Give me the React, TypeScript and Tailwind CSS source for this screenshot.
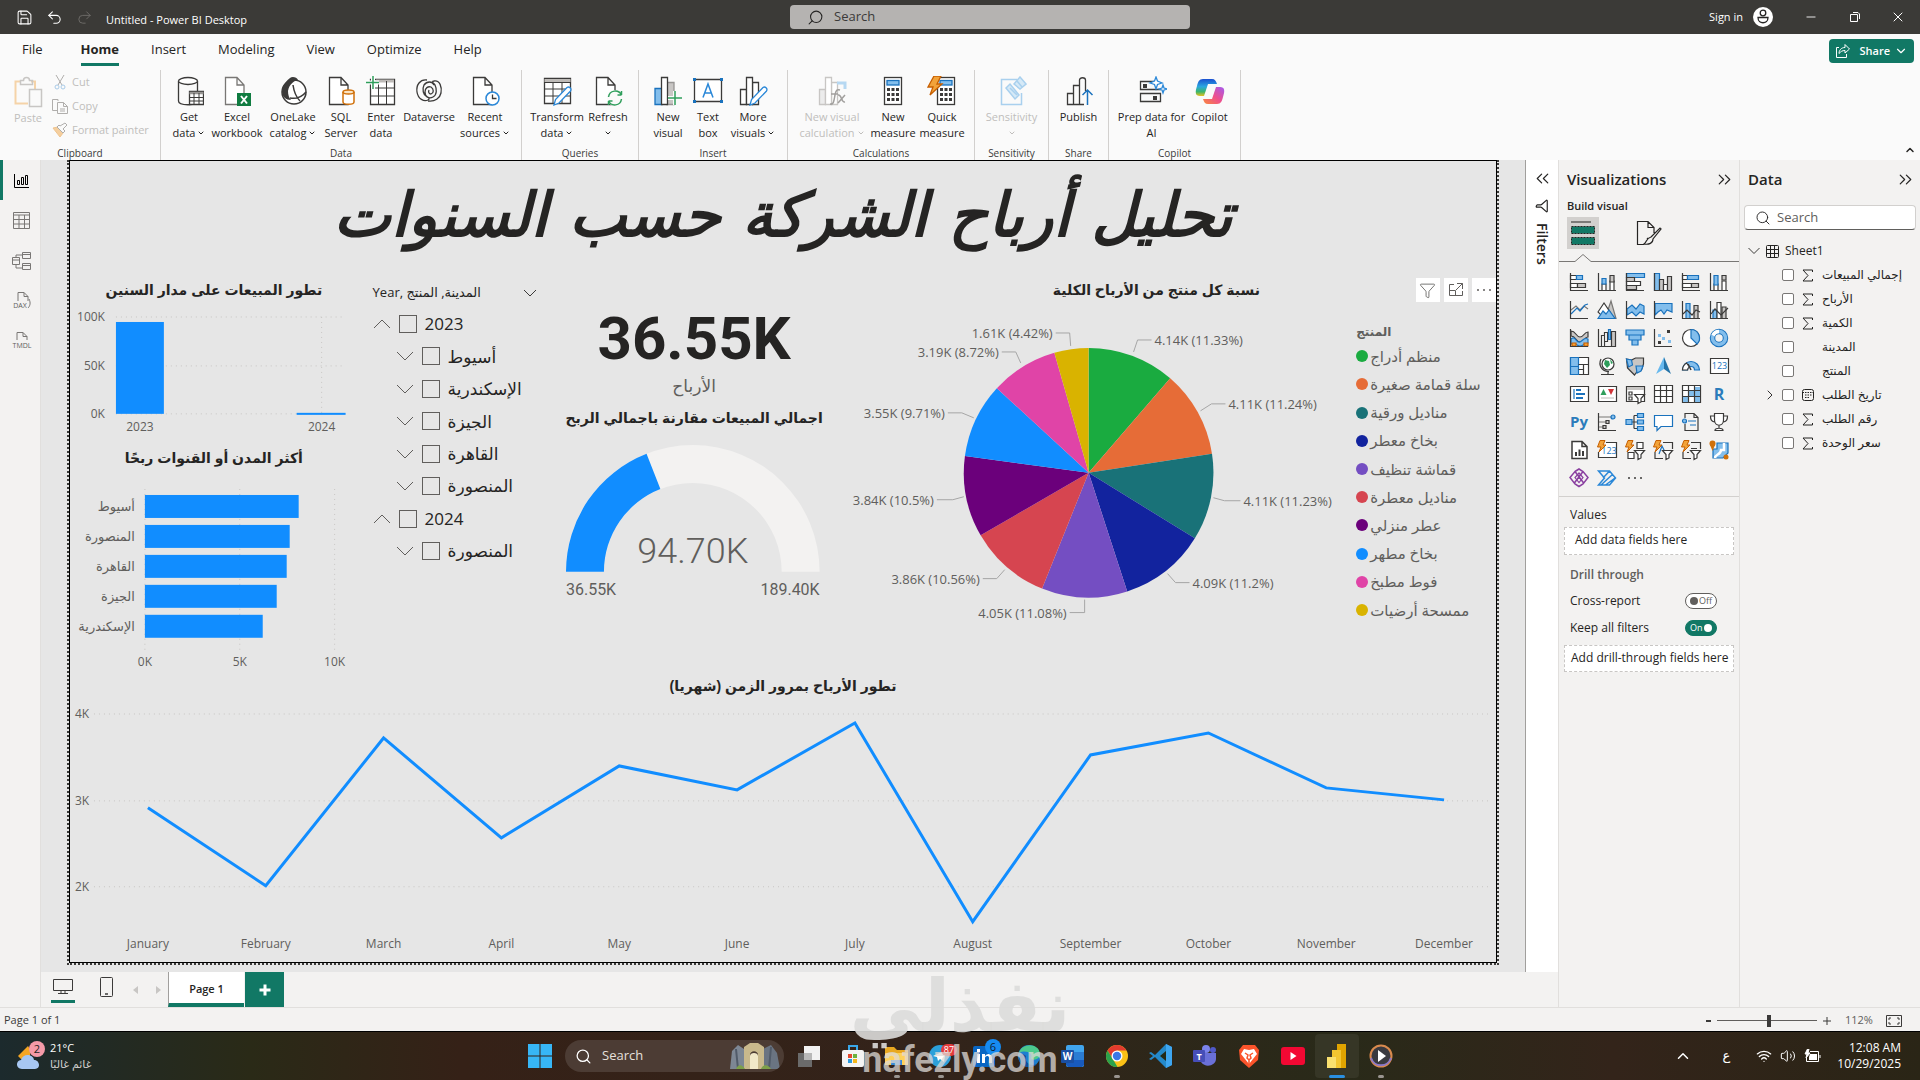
import type { ReactNode } from 'react';
import {
	ChevronDown,
	ChevronRight,
	ChevronUp,
	ChevronsLeft,
	ChevronsRight,
	Filter,
	Minus,
	Redo2,
	Save,
	Search,
	Undo2,
	Volume2,
	Wifi,
	X,
} from 'lucide-react';
import clsx from 'clsx';

const INK = '#3b3a39';
const GREY = '#c8c6c4';
const SKY = '#83beec';
const BLUE = '#1a72bd';
const AMBER = '#f2a33a';

/* ---------- Ribbon icons (30 x 30) ---------- */

const Doc = ({ stroke = INK }: { stroke?: string }) => (
	<path d="M3.5 1.5H15l7 7.5v19.500H3.5zM15 1.5V9h7" fill="#fff" stroke={stroke} />
);

const Bars = ({ faded }: { faded?: boolean }) => (
	<g stroke={faded ? '#c8c6c4' : INK} fill={faded ? '#ececec' : '#fff'}>
		<path d="M2.5 13.5h6v15h-6z" />
		<path d="M14.5 6.5h6v22h-6z" fill="#fff" />
		<path d="M8.5 1.5h6v27h-6z" fill="#fff" />
	</g>
);

const Pencil = () => (
	<path d="M12 29l1.5-5.500L25 11.500c2-1.500 5 1 3.500 3.500L17 27z" fill="#fff" stroke="#2b88d8" />
);

const Calc = ({ x = 0 }: { x?: number }) => (
	<g transform={`translate(${x} 0)`}>
		<rect x="6.5" y="1.5" width="17" height="27" fill="#fff" stroke={INK} />
		<rect x="9" y="4.5" width="12" height="4.5" fill={SKY} stroke={BLUE} />
		<path d="M9 13.5h12M9 18.5h12M9 23.5h12" stroke={INK} strokeWidth="3" strokeDasharray="3 1.5" />
	</g>
);

const ribbonIcons: Record<string, ReactNode> = {
	database: (
		<>
			<path d="M4.5 5v20c0 5 19 5 19 0V5" stroke={INK} />
			<ellipse cx="14" cy="5" rx="9.5" ry="3.5" stroke={INK} fill="#fff" />
			<path d="M15.5 15.5h14v13h-14z" fill="#fff" stroke={INK} />
			<path d="M15.5 17h14" stroke="#979593" strokeWidth="2.5" />
			<path d="M15.5 21.5h14M15.5 25h14M20 17v11M25 17v11" stroke={INK} strokeWidth="1" />
		</>
	),
	excel: (
		<>
			<Doc stroke="#797775" />
			<rect x="15" y="17" width="14" height="13" fill="#107c41" />
			<path d="M19 20l6 7.5M25 20l-6 7.5" stroke="#fff" strokeWidth="2" />
		</>
	),
	onelake: (
		<>
			<circle cx="16" cy="16" r="12" fill="#fff" stroke={INK} strokeWidth="1.5" />
			<path d="M4 15C5 9 9 4 12 2c2-2 7-1 8 2-3 0-9 4-10 11 0 4 1 7 3 9-5 0-9-3-9-9z" fill={INK} />
			<path d="M15 9c1 7 3 12 7 16M12 22c6 1 12-1 16-6" stroke={INK} strokeWidth="1.5" />
		</>
	),
	sql: (
		<>
			<Doc />
			<path d="M17 16v10c0 3 11 3 11 0V16" fill="#fff" stroke="#d0700a" strokeWidth="1.5" />
			<ellipse cx="22.5" cy="16" rx="5.5" ry="2" fill="#fbe3c0" stroke="#d0700a" strokeWidth="1.5" />
		</>
	),
	enter: (
		<>
			<path d="M4.5 3.5h24v25h-24z" stroke={INK} fill="#fff" />
			<path d="M10 5h18" stroke="#bebbb8" strokeWidth="3" />
			<path d="M4.5 12h24M4.5 20h24M12.5 5v23M20.5 5v23" stroke={INK} strokeWidth="1" />
			<path d="M7 0v13M0 6.5h13" stroke="#fff" strokeWidth="4" />
			<path d="M7 0v13M0 6.5h13" stroke="#2f9e5b" strokeWidth="1.5" />
		</>
	),
	dataverse: (
		<>
			<path d="M13 4C6 3 2 9 3 16s7 10 11 8c2-1 1-3-1-3-4-2-5-8-3-12 3-4 8-4 11 0 2 4 2 10-2 12-4 2-8 0-8-5 0-4 3-6 6-5 3 2 3 6 0 7-2 0-3-2-2-4" stroke={INK} />
			<path d="M20 5c6-1 8 6 7 12-1 5-6 9-13 8M20 5c-2 0-2 2 0 4" stroke={INK} />
		</>
	),
	recent: (
		<>
			<Doc />
			<circle cx="22.5" cy="22.5" r="6.5" fill="#fff" stroke="#2b88d8" strokeWidth="1.5" />
			<path d="M22.5 18.5v4h4" stroke={INK} />
		</>
	),
	transform: (
		<>
			<path d="M2.5 2.5h26v25h-26z" stroke={INK} fill="#fff" />
			<path d="M2.5 4.5h26" stroke="#bebbb8" strokeWidth="3" />
			<path d="M2.5 6.5h26M2.5 13h26M2.5 20h26M11 7v20M20 7v20" stroke={INK} strokeWidth="1" />
			<Pencil />
		</>
	),
	refresh: (
		<>
			<Doc />
			<circle cx="22" cy="22" r="8" fill="#fafafa" />
			<path d="M15.5 21c1-7 10-8 13-2v-4M28.5 19h-4M28.5 23c-1 7-10 8-13 2v4M15.5 25h4" stroke="#2f9e5b" strokeWidth="1.5" />
		</>
	),
	newVisual: (
		<>
			<path d="M2 12.5h7v16H2z" fill={SKY} stroke={BLUE} />
			<path d="M14 6.5h7v22h-7z" fill={GREY} stroke="#979593" />
			<path d="M8.5 1.5h6v27h-6z" fill="#fff" stroke={INK} />
			<path d="M22 15v14M15 22h14" stroke="#fafafa" strokeWidth="4" />
			<path d="M22 15v14M15 22h14" stroke="#2f9e5b" strokeWidth="1.5" />
		</>
	),
	textBox: (
		<>
			<path d="M1.5 3.5h27v22h-27z" stroke={INK} fill="#fff" />
			<path d="M10 21.5L15 8l5 13.500M11.5 17h7" stroke="#2b88d8" strokeWidth="1.5" />
			<path d="M0 2h3v3H0zM27 2h3v3h-3zM0 24h3v3H0zM27 24h3v3h-3z" fill={BLUE} />
		</>
	),
	moreVisuals: (
		<>
			<Bars />
			<Pencil />
		</>
	),
	visualCalc: (
		<>
			<Bars faded />
			<path d="M20 7h8v6" stroke="#b6d8f2" strokeWidth="3" />
			<path d="M13 28c4 1 4-4 5-9s2-6 5-5M14 18h7M21 19c4-1 3 8 7 7M28 19l-7 8" stroke="#a19f9d" strokeWidth="1.5" />
		</>
	),
	measure: <Calc />,
	quick: (
		<>
			<Calc x={4} />
			<path d="M7 0h7l-4 8h5L3 19l3-8H1z" fill={AMBER} stroke="#c75f00" />
		</>
	),
	sensitivity: (
		<g stroke="#a9d0ee" strokeWidth="1.5">
			<path d="M20 3.5H4.5v25h20V17" />
			<path d="M9 12l4-4 9 11-4 4zM13 12l7 7M17 8l6-7 6 7-6 5zM20 5l5 6" fill="#d5e9f7" />
		</g>
	),
	publish: (
		<>
			<path d="M3.5 17.5h6v11h-6zM9.5 9.5h6v19h-6zM15.5 9.5V4c0-3 6-3 6 0v24.500h-6" stroke={INK} />
			<path d="M20 15v15h6V15z" fill="#fafafa" />
			<path d="M23.5 29V14M18.5 19l5-5 5 5" stroke={BLUE} strokeWidth="1.5" />
		</>
	),
	prep: (
		<>
			<path d="M17 5.5H3.500v8H24M3.500 17.500h20v8h-20z" stroke={INK} />
			<path d="M6 8h4v4H6zM16 20h4v4h-4z" fill={INK} />
			<path d="M19 1l1.500 4L25 7l-4.500 1.500L19 13l-1.500-4.500L13 7l4.500-2zM26 9l1 3 3 1-3 1-1 3-1-3-3-1 3-1z" fill="#fff" stroke="#2b88d8" />
		</>
	),
	copilot: (
		<>
			<path d="M8 3h9c3 0 4 2 5 5H13L9 20H5C0 20 0 16 2 10c1-4 2-7 6-7z" fill="url(#cpA)" />
			<path d="M22 28h-9c-3 0-4-2-5-5h9l4-12h4c5 0 5 4 3 10-1 4-2 7-6 7z" fill="url(#cpB)" />
			<defs>
				<linearGradient id="cpA" x1="0" y1="0" x2="0" y2="1">
					<stop offset="0" stopColor="#1a4fd0" />
					<stop offset=".45" stopColor="#2aa7e0" />
					<stop offset=".75" stopColor="#3cb66a" />
					<stop offset="1" stopColor="#e8c020" />
				</linearGradient>
				<linearGradient id="cpB" x1="1" y1="0" x2="0" y2="1">
					<stop offset="0" stopColor="#a35af0" />
					<stop offset=".5" stopColor="#ef4f8c" />
					<stop offset="1" stopColor="#f98a3c" />
				</linearGradient>
			</defs>
		</>
	),
};

type RibbonItem = { icon: string; lines: string[]; width: string; menu?: boolean; faded?: boolean };

const ribbonGroups: { name: string; box: string; items: RibbonItem[] }[] = [
	{
		name: 'Data',
		box: 'w-[361px]',
		items: [
			{ icon: 'database', lines: ['Get', 'data'], width: 'w-[38px]', menu: true },
			{ icon: 'excel', lines: ['Excel', 'workbook'], width: 'w-[58px]' },
			{ icon: 'onelake', lines: ['OneLake', 'catalog'], width: 'w-[54px]', menu: true },
			{ icon: 'sql', lines: ['SQL', 'Server'], width: 'w-[42px]' },
			{ icon: 'enter', lines: ['Enter', 'data'], width: 'w-[38px]' },
			{ icon: 'dataverse', lines: ['Dataverse'], width: 'w-[58px]' },
			{ icon: 'recent', lines: ['Recent', 'sources'], width: 'w-[54px]', menu: true },
		],
	},
	{
		name: 'Queries',
		box: 'w-[117px]',
		items: [
			{ icon: 'transform', lines: ['Transform', 'data'], width: 'w-[56px]', menu: true },
			{ icon: 'refresh', lines: ['Refresh', ''], width: 'w-[46px]', menu: true },
		],
	},
	{
		name: 'Insert',
		box: 'w-[149px]',
		items: [
			{ icon: 'newVisual', lines: ['New', 'visual'], width: 'w-[40px]' },
			{ icon: 'textBox', lines: ['Text', 'box'], width: 'w-[40px]' },
			{ icon: 'moreVisuals', lines: ['More', 'visuals'], width: 'w-[50px]', menu: true },
		],
	},
	{
		name: 'Calculations',
		box: 'w-[187px]',
		items: [
			{ icon: 'visualCalc', lines: ['New visual', 'calculation'], width: 'w-[74px]', menu: true, faded: true },
			{ icon: 'measure', lines: ['New', 'measure'], width: 'w-[48px]' },
			{ icon: 'quick', lines: ['Quick', 'measure'], width: 'w-[50px]' },
		],
	},
	{
		name: 'Sensitivity',
		box: 'w-[74px]',
		items: [{ icon: 'sensitivity', lines: ['Sensitivity', ''], width: 'w-[60px]', menu: true, faded: true }],
	},
	{
		name: 'Share',
		box: 'w-[60px]',
		items: [{ icon: 'publish', lines: ['Publish'], width: 'w-[48px]' }],
	},
	{
		name: 'Copilot',
		box: 'w-[132px]',
		items: [
			{ icon: 'prep', lines: ['Prep data for', 'AI'], width: 'w-[70px]' },
			{ icon: 'copilot', lines: ['Copilot'], width: 'w-[46px]' },
		],
	},
];

/* ---------- Visual gallery icons (20 x 20) ---------- */

const Axis = () => <path d="M1.5 1v17.500H19" />;
const Bolt = () => <path d="M3 .5h5L6 5h3L2 12l2-5H.5z" fill={AMBER} stroke="#c75f00" strokeWidth="1" />;
const Funnel = () => <path d="M9.5 10.5h10L16 14.500V18l-3 1.500v-5z" fill="#fff" />;
const Frame = () => <path d="M1.5 2.5h18v15h-18z" fill="#fff" />;

const galleryIcons: { name: string; art: ReactNode }[] = [
	{ name: 'Stacked bar chart', art: <><path d="M1.5 3.5h6v4h-6zM1.5 11.5h7v4h-7z" fill="#fff" /><path d="M7.5 3.5h6v4h-6z" fill={SKY} stroke={BLUE} /><path d="M8.5 11.5h8v4h-8z" fill={GREY} /><Axis /></> },
	{ name: 'Stacked column chart', art: <><path d="M5 12h4v6.500H5zM13 9h4v9.500h-4z" fill="#fff" /><path d="M5 6.500h4V12H5z" fill={SKY} stroke={BLUE} /><path d="M13 3.500h4V10h-4z" fill={GREY} /><Axis /></> },
	{ name: 'Clustered bar chart', art: <><path d="M1.5 1.5h18v4h-18z" fill={SKY} stroke={BLUE} /><path d="M1.5 5.5h8v4h-8z" fill={GREY} /><path d="M1.5 9.5h14v4h-14z" fill="#fff" /><path d="M1.5 13.5h10v4h-10z" fill={GREY} /><Axis /></> },
	{ name: 'Clustered column chart', art: <><path d="M1.5 1.5h5v17h-5z" fill={SKY} stroke={BLUE} /><path d="M6.5 7.5h4v11h-4z" fill={GREY} /><path d="M10.5 12.5h4v6h-4z" fill="#fff" /><path d="M14.5 4.5h4v14h-4z" fill={GREY} /><Axis /></> },
	{ name: '100% stacked bar chart', art: <><path d="M1.5 3.5h5v4h-5zM1.5 11.5h9v4h-9z" fill="#fff" /><path d="M6.5 3.5h11v4h-11z" fill={SKY} stroke={BLUE} /><path d="M10.5 11.5h7v4h-7z" fill={GREY} /><Axis /></> },
	{ name: '100% stacked column chart', art: <><path d="M5 12h4v6.500H5zM13 9h4v9.500h-4z" fill="#fff" /><path d="M5 3.500h4V13H5z" fill={SKY} stroke={BLUE} /><path d="M13 3.500h4V8h-4z" fill={GREY} /><Axis /></> },
	{ name: 'Line chart', art: <><path d="M2 10l5-4 4 4 4-4 4 3" stroke="#797775" /><path d="M2 14l6-6 3 3 5-6 3-1" stroke={BLUE} /><Axis /></> },
	{ name: 'Area chart', art: <><path d="M8 18.5L14 1l5 17.500z" fill={GREY} stroke="#797775" /><path d="M1 12L7 3l6 9-6 6z" fill="#fff" /><path d="M1 18.5L6 11l3 3 3-4 6 8.500z" fill={SKY} stroke={BLUE} /></> },
	{ name: 'Stacked area chart', art: <><path d="M2 9l5-4 4 4 4-5 4 2v8l-4-2-4 4-4-4-5 3z" fill={SKY} stroke={BLUE} /><Axis /></> },
	{ name: '100% stacked area chart', art: <><path d="M2 3.5h17V12l-5-2-3 4-3-4-3 2-3 3z" fill={SKY} stroke={BLUE} /><Axis /></> },
	{ name: 'Line and stacked column chart', art: <><path d="M5 3.5h4v15H5z" fill={SKY} stroke={BLUE} /><path d="M13 5.500h4v13h-4z" fill={GREY} /><path d="M2 14l4-4 5 5 4-5 4 2" /><Axis /></> },
	{ name: 'Line and clustered column chart', art: <><path d="M4 10h4v8.500H4z" fill={SKY} stroke={BLUE} /><path d="M8 2.500h4v16H8z" fill="#fff" /><path d="M13 7h4v11.500h-4z" fill={GREY} /><path d="M2 14l4-5 6 6 7-7" /><Axis /></> },
	{ name: 'Ribbon chart', art: <><path d="M2 3c5 0 5 6 9 6s4-5 8-5v5c-4 0-4 5-8 5s-4-6-9-6z" fill={GREY} /><path d="M2 11c5-4 5 5 9 3s4-5 8-3v4c-4 0-4 3-8 3s-5-4-9-2z" fill={SKY} stroke={BLUE} /><path d="M3 15h4v3H3zM15 15h4v3h-4z" fill={AMBER} stroke="#c75f00" /><Axis /></> },
	{ name: 'Waterfall chart', art: <><path d="M4.5 7.5h3v11h-3zM7.5 4.5h3v9h-3z" fill="#fff" /><path d="M11.5 1.5h2v10h-2z" fill={SKY} stroke={BLUE} /><path d="M14.5 3.5h4v15h-4z" fill={GREY} /><Axis /></> },
	{ name: 'Funnel', art: <path d="M1 2h18v5H1zM4 7h12v5H4zM7 12h6v5H7z" fill={SKY} stroke={BLUE} /> },
	{ name: 'Scatter chart', art: <><Axis /><path d="M14 2h3v3h-3zM5 13h3v3H5z" fill={INK} stroke="none" /><path d="M5 6h3v3H5zM9 9h3v3H9zM15 12h3v3h-3z" fill={SKY} stroke="none" /></> },
	{ name: 'Pie chart', art: <><circle cx="10" cy="10" r="8.5" fill="#fff" /><path d="M10 1.5a8.500 8.500 0 016 14.500l-6-6z" fill={SKY} stroke={BLUE} /></> },
	{ name: 'Donut chart', art: <><circle cx="10" cy="10" r="6.5" stroke={BLUE} strokeWidth="5.500" /><circle cx="10" cy="10" r="6.5" stroke={SKY} strokeWidth="3.5" /><path d="M4 7.500a6.500 6.500 0 016-4" stroke="#fff" strokeWidth="3.5" /></> },
	{ name: 'Treemap', art: <><path d="M1.5 1.5h18v17h-18z" fill="#fff" /><path d="M1.5 1.5h8v9h-8zM1.5 10.5h8v8h-8z" fill={SKY} stroke={BLUE} /><path d="M9.5 8.5h10M9.5 13.5h5v5M14.5 8.5v10" /></> },
	{ name: 'Map', art: <><circle cx="11" cy="8" r="6" fill="#fff" /><path d="M8 4l4 1 1 4-3 3-3-4zM13 3l3 4-2 1z" fill="#2f9e5b" stroke="none" /><path d="M4 3C1 9 5 16 12 15.500M11 15.500v3M4 18.500h13" /></> },
	{ name: 'Filled map', art: <><path d="M1.5 3l5 1 4-2h8v6l-2 6-4 1-3 4-4-4-3-3z" fill={GREY} /><path d="M1.5 3l5 1 1 5-4 2zM11 10h7l-2 5-4 2z" fill={SKY} stroke={BLUE} /></> },
	{ name: 'Azure map', art: <><path d="M11 1L3 18l8-5z" fill="#66b8ee" stroke="none" /><path d="M11 1l7 17-7-5z" fill="#2373a8" stroke="none" /></> },
	{ name: 'Gauge', art: <><path d="M1.5 14a8.500 8.500 0 0117 0h-5a3.500 3.500 0 00-7 0z" fill={SKY} stroke={BLUE} /><path d="M1.5 14a8.500 8.500 0 014-7l3 4a3.500 3.500 0 00-2 3z" fill="#fff" /><path d="M10 14l-3-6" strokeWidth="1.5" /></> },
	{ name: 'Card', art: <><Frame /><text x="10.5" y="13" fontSize="9" textAnchor="middle" fill={BLUE} stroke="none">123</text></> },
	{ name: 'Multi-row card', art: <><Frame /><path d="M5 5v10" stroke={BLUE} /><path d="M7 6h5M7 10h9M7 14h7" stroke={BLUE} strokeWidth="2" /></> },
	{ name: 'KPI', art: <><Frame /><path d="M3.5 11L6.500 5l3 6z" fill="#2f9e5b" stroke="none" /><path d="M11 5h6l-3 6z" fill="#d13438" stroke="none" /><path d="M4 14h13" stroke={GREY} /></> },
	{ name: 'Slicer', art: <><path d="M1.5 2.5h18v15h-18z" fill="#fff" /><path d="M2 4.5h17" stroke={GREY} strokeWidth="3" /><path d="M4 8h3v3H4zM4 13h3v3H4z" /><Funnel /></> },
	{ name: 'Table', art: <><path d="M1.5 1.5h18v17h-18z" fill="#fff" /><path d="M1.5 6.5h18M1.5 12.5h18M7.5 2v16M13.5 2v16" /></> },
	{ name: 'Matrix', art: <><path d="M1.5 1.5h18v17h-18z" fill="#fff" /><path d="M2 12h6v6H2zM13 3h6v15h-6zM8 7h6v5H8z" fill={SKY} stroke="none" /><path d="M1.5 6.5h18M1.5 12.5h18M7.5 2v16M13.5 2v16" /></> },
	{ name: 'R script visual', art: <text x="10" y="16" fontSize="16" fontWeight="700" textAnchor="middle" fill="#2b7cbb" stroke="none">R</text> },
	{ name: 'Python visual', art: <text x="10" y="15" fontSize="15" fontWeight="700" textAnchor="middle" fill="#2b7cbb" stroke="none">Py</text> },
	{ name: 'Key influencers', art: <><Axis /><path d="M2 5h13M2 10h8M2 15h5" stroke="#797775" /><circle cx="16" cy="5" r="2" fill={SKY} stroke={BLUE} /><path d="M9 8.5h3v3H9zM6 13.500h3v3H6z" fill={GREY} /></> },
	{ name: 'Decomposition tree', art: <><path d="M6 10h6M9 3.5v13M9 3.5h4M9 16.5h4" /><path d="M1 7.5h6v5H1zM12.500 1.500h6v4h-6zM12.500 8h6v4h-6zM12.500 14.500h6v4h-6z" fill={SKY} stroke={BLUE} /></> },
	{ name: 'Q&A', art: <path d="M1.5 3.5h18v11H8l-4 4v-4H1.500z" fill="#fff" stroke={BLUE} /> },
	{ name: 'Narrative', art: <><path d="M4 6V1.500h9l4 4v13H4V12M13 1.500v4h4" /><path d="M7 9h8M9 13h6" stroke={BLUE} /><circle cx="3.5" cy="9" r="2" fill={SKY} stroke={BLUE} /></> },
	{ name: 'Metrics', art: <path d="M5.5 1.5h9V8c0 7-9 7-9 0zM5.500 4H1.500c0 4 1 5 4 6M14.500 4h4c0 4-1 5-4 6M10 13v3M6 18.500c0-3 8-3 8 0z" fill="#fff" /> },
	{ name: 'Paginated report', art: <><path d="M3 1.5h10l5 5v12H3zM13 1.500v5h5" fill="#fff" strokeWidth="1.5" /><path d="M7 16v-4M10.500 16V9.500M14 16v-5" strokeWidth="2" /></> },
	{ name: 'Card (new)', art: <><path d="M9 2.5h10.500v15h-18V12" fill="#fff" /><text x="12" y="14" fontSize="9" textAnchor="middle" fill={BLUE} stroke="none">123</text><Bolt /></> },
	{ name: 'Button slicer', art: <><path d="M12 2.5h6v6h-6zM3 12.500h6v6H3z" fill="#fff" /><Funnel /><Bolt /></> },
	{ name: 'Text slicer', art: <><path d="M10 2.5h9.500V9M2 12v6.500h8" /><path d="M6 14l3-8 3 6" stroke={BLUE} /><Funnel /><Bolt /></> },
	{ name: 'List slicer', art: <><path d="M10 2.5h9.500V9M2 12v6.500h8M10 8.500h6M6 12.500h2" /><Funnel /><Bolt /></> },
	{ name: 'ArcGIS map', art: <><path d="M4 18V9h4V3h11v10l-5 5z" fill={SKY} stroke={BLUE} /><path d="M6 18c0-4 6-3 6-8h3V3" stroke="#fff" strokeWidth="2.5" /><circle cx="3.5" cy="3.5" r="3" fill="#d0700a" stroke="none" /><path d="M1 5l2.500 6L6 5z" fill="#d0700a" stroke="none" /><circle cx="17" cy="17" r="2.5" fill="#d0700a" stroke="none" /></> },
	{ name: 'Power Apps', art: <><path d="M6 3.5L10 1l4 2.500 5 6-5 6.500-4 2.500L6 16 1 9.500zM6 3.500l9 12M14 3.500l-9 12" stroke="#8a3fa0" strokeWidth="1.5" /><path d="M10 5l4 4.500-4 5-4-5z" stroke="#8a3fa0" /></> },
	{ name: 'Power Automate', art: <path d="M1.5 3h11l6 7-6 7h-11l6-7zM6 10L12.500 3M4 17L16 6M8.500 17L18 10" stroke="#2b88d8" strokeWidth="1.5" /> },
];

/* ---------- Report data ---------- */

const cityProfit = [
	{ city: 'أسيوط', width: 154 },
	{ city: 'المنصورة', width: 145 },
	{ city: 'القاهرة', width: 142 },
	{ city: 'الجيزة', width: 132 },
	{ city: 'الإسكندرية', width: 118 },
];

const slicerRows = [
	{ label: '2023', open: true },
	{ label: 'أسيوط' },
	{ label: 'الإسكندرية' },
	{ label: 'الجيزة' },
	{ label: 'القاهرة' },
	{ label: 'المنصورة' },
	{ label: '2024', open: true },
	{ label: 'المنصورة' },
];

// leader: edge of the slice -> elbow -> start of the label
const products = [
	{ name: 'منظم أدراج', color: '#1aab40', share: 11.33, label: '4.14K (11.33%)', leader: [45, -121, 49, -133, 63, -133] },
	{ name: 'سلة قمامة صغيرة', color: '#e66c37', share: 11.24, label: '4.11K (11.24%)', leader: [112, -62, 123, -69, 137, -69] },
	{ name: 'مناديل ورقية', color: '#197278', share: 11.23, label: '4.11K (11.23%)', leader: [125, 25, 136, 28, 152, 28] },
	{ name: 'بخاخ معطر', color: '#12239e', share: 11.2, label: '4.09K (11.2%)', leader: [79, 101, 87, 110, 101, 110] },
	{ name: 'قماشة تنظيف', color: '#744ec2', share: 11.08, label: '4.05K (11.08%)', leader: [-4, 127, -4, 140, -19, 140] },
	{ name: 'مناديل معطرة', color: '#d64550', share: 10.56, label: '3.86K (10.56%)', leader: [-84, 97, -92, 106, -106, 106] },
	{ name: 'عطر منزلي', color: '#6b007b', share: 10.5, label: '3.84K (10.5%)', leader: [-125, 24, -136, 27, -152, 27] },
	{ name: 'بخاخ مطهر', color: '#118dff', share: 9.71, label: '3.55K (9.71%)', leader: [-115, -55, -127, -60, -141, -60] },
	{ name: 'فوط مطبخ', color: '#e044a7', share: 8.72, label: '3.19K (8.72%)', leader: [-68, -110, -73, -121, -87, -121] },
	{ name: 'ممسحة أرضيات', color: '#d9b300', share: 4.42, label: '1.61K (4.42%)', leader: [-18, -127, -19, -140, -33, -140] },
];

const months = [
	{ name: 'January', y: 104 },
	{ name: 'February', y: 182 },
	{ name: 'March', y: 34 },
	{ name: 'April', y: 134 },
	{ name: 'May', y: 62 },
	{ name: 'June', y: 86 },
	{ name: 'July', y: 19 },
	{ name: 'August', y: 218 },
	{ name: 'September', y: 51 },
	{ name: 'October', y: 29 },
	{ name: 'November', y: 84 },
	{ name: 'December', y: 96 },
];

const fields = [
	{ name: 'إجمالي المبيعات', kind: 'sum' },
	{ name: 'الأرباح', kind: 'sum' },
	{ name: 'الكمية', kind: 'sum' },
	{ name: 'المدينة', kind: '' },
	{ name: 'المنتج', kind: '' },
	{ name: 'تاريخ الطلب', kind: 'date' },
	{ name: 'رقم الطلب', kind: 'sum' },
	{ name: 'سعر الوحدة', kind: 'sum' },
];

/* ---------- Window chrome ---------- */

function TitleBar() {
	return (
		<header className="grid h-[34px] shrink-0 grid-cols-[79fr_40fr_73fr] items-center bg-[#3b3a37] text-white">
			<div className="flex items-center gap-[13px] pl-4">
				<button aria-label="Save"><Save size={17} strokeWidth={1.5} /></button>
				<button aria-label="Undo"><Undo2 size={17} strokeWidth={1.5} /></button>
				<button aria-label="Redo" className="text-[#6f6d6a]"><Redo2 size={17} strokeWidth={1.3} /></button>
				<span className="pt-1.5 text-[11px]">Untitled - Power BI Desktop</span>
			</div>
			<label className="flex h-6 items-center gap-2.5 rounded-sm bg-[#b5b3b1] px-[17px] text-[#252423]">
				<Search size={17} strokeWidth={1.5} className="shrink-0 -scale-x-100" />
				<input aria-label="Search" placeholder="Search" className="w-full bg-transparent text-[13px] outline-none placeholder:text-[#3b3a39]" />
			</label>
			<div className="flex items-center justify-end">
				<button className="flex items-center gap-2.5 text-[11px]">
					Sign in
					<svg width="20" height="20" viewBox="0 0 20 20" fill="none" stroke="#252423" strokeWidth="1.3">
						<circle cx="10" cy="10" r="10" fill="#fff" stroke="none" />
						<circle cx="10" cy="6" r="2.8" />
						<path d="M5 10.5h10c0 7-10 7-10 0z" />
					</svg>
				</button>
				<button aria-label="Minimize" className="ml-[31px]"><Minus size={14} strokeWidth={1.5} /></button>
				<button aria-label="Restore" className="ml-[30px]">
					<svg width="14" height="14" viewBox="0 0 14 14" fill="none" stroke="#fff"><path d="M2.5 4.5h7v7h-7zM5 2.5h5l1.500 1.500v5" /></svg>
				</button>
				<button aria-label="Close" className="ml-[28px] pr-3.5"><X size={16} strokeWidth={1.5} /></button>
			</div>
		</header>
	);
}

function Ribbon() {
	return (
		<div className="shrink-0 bg-[#fafafa] text-[#252423]">
			<div className="flex h-[34px] items-center justify-between pr-1.5 pl-[22px]">
				<nav className="flex items-center gap-8 text-[13px]">
					{['File', 'Home', 'Insert', 'Modeling', 'View', 'Optimize', 'Help'].map((tab) => (
						<button
							key={tab}
							className={clsx('border-b-[3px] pb-0.5 leading-6', tab === 'Home' ? 'border-[#117865] font-bold' : 'border-transparent', tab === 'File' && 'mr-1.5')}
						>
							{tab}
						</button>
					))}
				</nav>
				<button className="flex h-6 items-center gap-2 rounded bg-[#117865] px-1.5 text-[11px] font-semibold text-white">
					<svg width="16" height="16" viewBox="0 0 16 16" fill="none" stroke="#fff"><path d="M4 4.5H1.500v10h10V11M10 1.500L14.500 6 10 10V7.500c-3 0-4 1-6 3 0-3 2-6 6-6z" /></svg>
					<span className="flex items-center gap-1">Share <ChevronDown size={14} strokeWidth={2} /></span>
				</button>
			</div>
			<div className="flex h-[92px] items-end">
				<section className="flex h-[90px] w-[161px] flex-col border-r border-[#d2d0ce] text-[11px] text-[#c0bebc]">
					<div className="flex flex-1 gap-2 pl-3">
						<button className="flex w-8 flex-col items-center pt-1.5">
							<svg width="30" height="32" viewBox="0 0 30 32" fill="none" strokeWidth="1.5" className="shrink-0">
								<path d="M8 5.5H2.500v22H15M18 5.500h4V13" stroke="#f5d3a8" strokeWidth="2" />
								<path d="M7.5 8.5v-4h3c0-4 6-4 6 0h3v4zM16.500 13.500h12v17h-12z" stroke="#c8c6c4" />
							</svg>
							<span className="leading-5">Paste</span>
						</button>
						<div className="flex flex-col leading-6">
							<button className="flex items-center gap-1">
								<svg width="16" height="16" viewBox="0 0 16 16" fill="none" stroke="#b0aeac"><path d="M4 1l6 10M12 1L6 11" /><circle cx="5" cy="13" r="2" stroke="#a9cbe8" /><circle cx="11" cy="13" r="2" stroke="#a9cbe8" /></svg>
								Cut
							</button>
							<button className="flex items-center gap-1">
								<svg width="16" height="16" viewBox="0 0 16 16" fill="none" stroke="#b0aeac"><path d="M6 3V1.500H.5v11H5M5.500 4.500h6l4 4v7h-10zM11.500 4.500v4h4M8 11h5M8 13h5" /></svg>
								Copy
							</button>
							<button className="flex items-center gap-1">
								<svg width="16" height="16" viewBox="0 0 16 16" fill="none" stroke="#b0aeac"><path d="M1 6l5-1 5 6-3 4z" fill="#f5cf9f" stroke="#efc48f" /><path d="M5 5l6 6 2-2-2-2 4-4-2-2-5 3-1-1z" fill="#fafafa" /></svg>
								Format painter
							</button>
						</div>
					</div>
					<h2 className="text-center text-[10px] leading-[14px] text-[#3b3a39]">Clipboard</h2>
				</section>
				{ribbonGroups.map((group) => (
					<section key={group.name} className={clsx('flex h-[90px] flex-col border-r border-[#d2d0ce]', group.box)}>
						<div className="flex flex-1 justify-center">
							{group.items.map((item) => (
								<button key={item.icon} className={clsx('flex flex-col items-center pt-1.5 text-[11px] leading-4 whitespace-nowrap', item.width, item.faded && 'text-[#c0bebc]')}>
									<svg width="30" height="30" viewBox="0 0 30 30" fill="none" strokeWidth="1.3" className="mb-[3px]">{ribbonIcons[item.icon]}</svg>
									<span>{item.lines[0]}</span>
									<span className="flex items-center gap-0.5">
										{item.lines[1]}
										{item.menu && <ChevronDown size={8} strokeWidth={3} className="h-4" />}
									</span>
								</button>
							))}
						</div>
						<h2 className="text-center text-[10px] leading-[14px] text-[#3b3a39]">{group.name}</h2>
					</section>
				))}
				<button aria-label="Collapse the ribbon" className="ml-auto self-end pr-1 pb-1"><ChevronUp size={12} strokeWidth={3} /></button>
			</div>
		</div>
	);
}

function ViewRail() {
	const views = [
		{ name: 'Report view', art: <path d="M2.5 3v13.500H17M5.500 9.500h2v4h-2zM9.500 6.500h2v7h-2zM13.500 4.500h2v9h-2z" stroke="#000" /> },
		{ name: 'Table view', art: <path d="M1.5 1.5h16v16h-16zM1.5 4h16M1.5 8.5h16M1.5 13h16M7 4v13M12.500 4v13" /> },
		{ name: 'Model view', art: <path d="M.5 6.5h7v7h-7zM.5 9h7M10.500 1.500h8v6h-8zM10.500 3.500h8M10.500 12.500h8v6h-8zM10.500 14.500h8M4 6V4h6M4 14v3h6" /> },
		{ name: 'DAX query view', art: <><path d="M6 10V1.500h6l4 4V10M12 1.500v4h4M17 8c2 4 1 7-1 9" /><text x="8" y="16.5" fontSize="7" textAnchor="middle" fill="#605e5c" stroke="none">DAX</text></> },
		{ name: 'TMDL view', art: <><path d="M5 9V1.500h6l4 4V9M11 1.500v4h4" /><text x="10" y="17" fontSize="7" textAnchor="middle" fill="#605e5c" stroke="none">TMDL</text></> },
	];
	return (
		<nav className="flex w-[41px] shrink-0 flex-col border-r border-[#e1dfdd] bg-[#f3f2f1]">
			{views.map((view, i) => (
				<button key={view.name} aria-label={view.name} className={clsx('flex h-10 items-center justify-center border-l-[3px]', i === 0 ? 'border-[#117865]' : 'border-transparent')}>
					<svg width="19" height="19" viewBox="0 0 19 19" fill="none" stroke="#797775" className="overflow-visible">{view.art}</svg>
				</button>
			))}
		</nav>
	);
}

/* ---------- Report page ---------- */

function VisualTitle({ children }: { children: ReactNode }) {
	return (
		<h2 dir="rtl" className="flex h-11 items-center justify-center text-[14px] font-bold whitespace-nowrap text-[#252423] [font-family:'Liberation_Sans','DejaVu_Sans',sans-serif]">
			{children}
		</h2>
	);
}

function YearlySales() {
	return (
		<svg viewBox="0 0 288 125" className="block w-full overflow-visible" fill="#605e5c" fontSize="12">
			<path d="M46 5h230M46 54h230M46 102h230M252 5v97" fill="none" stroke="#c8c6c4" strokeDasharray="1 4" />
			<rect x="46" y="10" width="48" height="92" fill="#118dff" />
			<rect x="227" y="101" width="49" height="2" fill="#118dff" />
			<g textAnchor="end">
				<text x="35" y="9">100K</text>
				<text x="35" y="58">50K</text>
				<text x="35" y="106">0K</text>
			</g>
			<g textAnchor="middle">
				<text x="70" y="119">2023</text>
				<text x="252" y="119">2024</text>
			</g>
		</svg>
	);
}

function CityProfit() {
	return (
		<svg viewBox="0 0 288 189" className="block w-full" fill="#605e5c" fontSize="12">
			<path d="M75 8v162M170 8v162M265 8v162" fill="none" stroke="#c8c6c4" strokeDasharray="1 4" />
			{cityProfit.map((row, i) => (
				<g key={row.city}>
					<rect x="75" y={14 + i * 30} width={row.width} height="23" fill="#118dff" />
					<text x="65" y={30 + i * 30} fontSize="13" textAnchor="end">{row.city}</text>
				</g>
			))}
			<g textAnchor="middle">
				<text x="75" y="185">0K</text>
				<text x="170" y="185">5K</text>
				<text x="265" y="185">10K</text>
			</g>
		</svg>
	);
}

function Caret({ up }: { up?: boolean }) {
	return (
		<svg width="18" height="12" viewBox="0 0 18 12" fill="none" stroke="#605e5c">
			<path d={up ? 'M1 10l8-8 8 8' : 'M1 2l8 8 8-8'} />
		</svg>
	);
}

function Slicer() {
	return (
		<section className="flex flex-col pt-3 pl-[15px] text-[#252423]">
			<div className="flex h-[26px] w-[164px] items-center justify-between">
				<h2 className="text-[13px] whitespace-nowrap">Year, المدينة, المنتج</h2>
				<svg width="14" height="9" viewBox="0 0 14 9" fill="none" stroke="#3b3a39"><path d="M1 1l6 6 6-6" /></svg>
			</div>
			<div className="mt-[3px] flex h-[257px] flex-col justify-between">
				{slicerRows.map((row, i) => (
					<label key={i} className={clsx('flex h-[30px] items-center gap-2 text-[17px]', !row.open && 'pl-[23px]')}>
						<Caret up={row.open} />
						<input type="checkbox" className="size-[18px] appearance-none border border-[#605e5c]" />
						<span>{row.label}</span>
					</label>
				))}
			</div>
		</section>
	);
}

function polar(r: number, deg: number) {
	const a = ((deg - 90) * Math.PI) / 180;
	return `${(r * Math.cos(a)).toFixed(2)} ${(r * Math.sin(a)).toFixed(2)}`;
}

function CardAndGauge() {
	return (
		<section className="flex flex-col text-[#605e5c]">
			<div className="flex h-[128px] flex-col items-center pt-9 [font-family:Roboto,'DejaVu_Sans',sans-serif]">
				<strong className="text-[60px] leading-[70px] text-[#252423]">36.55K</strong>
				<span className="text-[17px] leading-6">الأرباح</span>
			</div>
			<VisualTitle>اجمالي المبيعات مقارنة باجمالي الربح</VisualTitle>
			<svg viewBox="-140 -132 282 164" className="block w-full">
				<path d="M-127 0A127 127 0 01127 0H89A89 89 0 00-89 0z" fill="#f3f2f1" />
				<path d={`M-127 0A127 127 0 01${polar(127, -21.4)}L${polar(89, -21.4)}A89 89 0 00-89 0z`} fill="#118dff" />
				<g fill="#605e5c" className="[font-family:Roboto,sans-serif]">
					<text y="-9" fontSize="36" fontWeight="300" textAnchor="middle">94.70K</text>
					<text x="-127" y="23" fontSize="16">36.55K</text>
					<text x="127" y="23" fontSize="16" textAnchor="end">189.40K</text>
				</g>
			</svg>
		</section>
	);
}

function ProductPie() {
	let turned = 0;
	const slices = products.map((p) => {
		const from = turned;
		turned += p.share * 3.6;
		return { ...p, d: `M0 0L${polar(125, from)}A125 125 0 0 1 ${polar(125, turned)}z` };
	});

	return (
		<section className="flex flex-col">
			<div className="flex items-center">
				<div className="flex-1 pl-[62px]"><VisualTitle>نسبة كل منتج من الأرباح الكلية</VisualTitle></div>
				<div className="flex gap-1 text-[#605e5c]">
					<button aria-label="Filters on this visual" className="flex size-6 items-center justify-center bg-white"><Filter size={17} strokeWidth={1.2} /></button>
					<button aria-label="Focus mode" className="flex size-6 items-center justify-center bg-white">
						<svg width="16" height="16" viewBox="0 0 16 16" fill="none" stroke="currentColor"><path d="M6 2.5H1.500v11h13V9M9 1.500h5.500V7M14.500 1.500L8 8M1.500 8.500h6v5" /></svg>
					</button>
					<button aria-label="More options" className="flex size-6 items-center justify-center bg-white">
						<svg width="16" height="4" viewBox="0 0 16 4" fill="currentColor"><circle cx="2" cy="2" r="1" /><circle cx="8" cy="2" r="1" /><circle cx="14" cy="2" r="1" /></svg>
					</button>
				</div>
			</div>
			<div className="grid grid-cols-[510fr_152fr]">
				<svg viewBox="-254 -161 510 358" className="block w-full" fontSize="13" fill="#605e5c">
					{slices.map((s) => {
						const [ax, ay, bx, by, cx, cy] = s.leader;
						const right = ax > 0;
						return (
							<g key={s.name}>
								<path d={s.d} fill={s.color} />
								<path d={`M${ax} ${ay}L${bx} ${by}H${cx}`} fill="none" stroke="#a6a6a6" />
								<text x={cx + (right ? 3 : -3)} y={cy + 5} textAnchor={right ? 'start' : 'end'}>{s.label}</text>
							</g>
						);
					})}
				</svg>
				<div className="pt-2.5 pl-3 text-[#605e5c]">
					<h3 className="text-[12px] leading-5 font-bold">المنتج</h3>
					<ul className="flex h-[282px] flex-col text-[15px] whitespace-nowrap">
						{slices.map((s) => (
							<li key={s.name} className="flex flex-1 items-center gap-0.5">
								<svg width="12" height="12" viewBox="0 0 12 12" className="shrink-0"><circle cx="6" cy="6" r="6" fill={s.color} /></svg>
								{s.name}
							</li>
						))}
					</ul>
				</div>
			</div>
		</section>
	);
}

function MonthlyProfit() {
	const x = (i: number) => 78 + i * 118;
	return (
		<section className="-mt-[5px]">
			<VisualTitle>تطور الأرباح بمرور الزمن (شهريا)</VisualTitle>
			<svg viewBox="0 5 1428 254" className="block w-full" fontSize="12" fill="#605e5c">
				<path d="M24 10h1396M24 97h1396M24 183h1396" fill="none" stroke="#c8c6c4" strokeDasharray="1 4" />
				<text x="5" y="14">4K</text>
				<text x="5" y="101">3K</text>
				<text x="5" y="187">2K</text>
				<polyline points={months.map((m, i) => `${x(i)},${m.y}`).join(' ')} fill="none" stroke="#118dff" strokeWidth="3" />
				{months.map((m, i) => (
					<text key={m.name} x={x(i)} y="244" textAnchor="middle">{m.name}</text>
				))}
			</svg>
		</section>
	);
}

function ReportPage() {
	return (
		<main className="flex-1 bg-[#e6e6e6] px-[26px] pb-1.5">
			<div className="border-x-2 border-b-2 border-dotted border-[#3b3a39]">
				<div className="border border-black">
					<h1 dir="rtl" className="flex h-[107px] items-center justify-center text-[61px] leading-none font-bold whitespace-nowrap text-[#252423] italic [font-family:'DejaVu_Sans',sans-serif]">
						تحليل أرباح الشركة حسب السنوات
					</h1>
					<div className="grid grid-cols-[288fr_196fr_282fr_662fr]">
						<section>
							<VisualTitle>تطور المبيعات على مدار السنين</VisualTitle>
							<YearlySales />
							<VisualTitle>أكثر المدن أو القنوات ربحًا</VisualTitle>
							<CityProfit />
						</section>
						<Slicer />
						<CardAndGauge />
						<ProductPie />
					</div>
					<MonthlyProfit />
				</div>
			</div>
		</main>
	);
}

function FiltersPane() {
	return (
		<aside className="flex w-[33px] shrink-0 flex-col items-center gap-2.5 border-l border-[#a19f9d] bg-white pt-2 text-[#252423]">
			<button aria-label="Expand filters pane"><ChevronsLeft size={21} strokeWidth={1.4} /></button>
			<Filter size={14} strokeWidth={2} className="rotate-90" />
			<h2 className="text-[14px] font-semibold [writing-mode:vertical-rl]">Filters</h2>
		</aside>
	);
}

function PageTabs() {
	return (
		<div className="flex h-[35px] shrink-0 items-stretch bg-[#f3f2f1]">
			<button aria-label="Desktop layout" className="mb-1 ml-2.5 flex w-6 flex-col items-center justify-between border-b-[3px] border-[#117865] pt-1.5">
				<svg width="20" height="17" viewBox="0 0 20 17" fill="none" stroke="#3b3a39"><path d="M.5 1.5h19v11H.5zM5 15.500h10M8 13v2M12 13v2" /></svg>
			</button>
			<button aria-label="Mobile layout" className="ml-[25px] pb-1">
				<svg width="13" height="21" viewBox="0 0 13 21" fill="none" stroke="#3b3a39"><rect x=".5" y=".5" width="12" height="19" rx="1" /><path d="M5 17h3" strokeWidth="1.5" /></svg>
			</button>
			<button aria-label="Previous page" className="ml-5 text-[#c8c6c4]"><svg width="6" height="8" viewBox="0 0 6 8" fill="currentColor"><path d="M5 0v8L0 4z" /></svg></button>
			<button aria-label="Next page" className="ml-4 text-[#c8c6c4]"><svg width="6" height="8" viewBox="0 0 6 8" fill="currentColor"><path d="M1 0v8l5-4z" /></svg></button>
			<button className="ml-[7px] w-[76px] border-b-4 border-l border-b-[#117865] border-l-[#a19f9d] bg-white pt-1 text-[11px] font-semibold text-[#252423]">Page 1</button>
			<button aria-label="New page" className="ml-px flex w-[39px] items-center justify-center bg-[#117865]">
				<svg width="12" height="12" viewBox="0 0 12 12" stroke="#fff" strokeWidth="3"><path d="M6 .5v11M.5 6h11" /></svg>
			</button>
		</div>
	);
}

function Toggle({ label, on }: { label: string; on?: boolean }) {
	return (
		<label className="flex h-[27px] items-center justify-between pr-[17px]">
			{label}
			<span className="relative flex h-4 w-8 items-center">
				<input type="checkbox" role="switch" defaultChecked={on} className={clsx('size-full appearance-none rounded-full border', on ? 'border-[#117865] bg-[#117865]' : 'border-[#605e5c] bg-white')} />
				<span className={clsx('absolute inset-0 flex items-center justify-between px-[5px] text-[9px]', on ? 'flex-row-reverse text-white' : 'text-[#605e5c]')}>
					<span className={clsx('size-2 rounded-full', on ? 'bg-white' : 'bg-[#605e5c]')} />
					{on ? 'On' : 'Off'}
				</span>
			</span>
		</label>
	);
}

function VisualizationsPane() {
	return (
		<aside className="flex w-[181px] shrink-0 flex-col border-l border-[#e1dfdd] bg-[#f3f2f1] text-[#252423]">
			<div className="flex h-9 items-center justify-between pr-1 pl-2">
				<h2 className="pt-0.5 text-[15px] font-semibold">Visualizations</h2>
				<button aria-label="Collapse visualizations pane" className="pt-0.5"><ChevronsRight size={21} strokeWidth={1.4} /></button>
			</div>
			<h3 className="pl-2 text-[11px] leading-5 font-semibold">Build visual</h3>
			<div className="flex gap-[34px] pt-px pl-2">
				<button aria-label="Build visual" className="flex size-8 items-center justify-center bg-[#d2d0ce]">
					<svg width="26" height="26" viewBox="0 0 26 26" fill="#117865" stroke="#252423"><path d="M1 2h20" /><path d="M1.5 6.5h23v7h-23zM1.5 17.5h23v7h-23z" strokeDasharray="2 1" /></svg>
				</button>
				<button aria-label="Format visual" className="flex size-8 items-center justify-center">
					<svg width="26" height="26" viewBox="0 0 26 26" fill="none" stroke="#252423" strokeWidth="1.2"><path d="M8 24.5H1.500v-23H12l6 6V12M12 1.500v6h6M18 12v1M12 18l-1 1M15 17l9-9c1 0 1 1 1 1l-8 10c0 4-4 6-9 5 3-2 2-6 7-7z" /></svg>
				</button>
			</div>
			<svg viewBox="0 0 180 13" className="block w-full" fill="none" stroke="#797775"><path d="M0 12.5h16l8-7 8 7h148" /></svg>
			<div className="grid grid-cols-6 px-1.5 pt-1.5 pb-1">
				{galleryIcons.map((icon) => (
					<button key={icon.name} aria-label={icon.name} className="flex h-7 items-center justify-center">
						<svg width="20" height="20" viewBox="0 0 20 20" fill="none" stroke={INK} strokeWidth="1.2" className="overflow-visible">{icon.art}</svg>
					</button>
				))}
				<button aria-label="Get more visuals" className="flex h-7 items-center justify-center">
					<svg width="16" height="4" viewBox="0 0 16 4" fill={INK}><circle cx="2" cy="2" r="1" /><circle cx="8" cy="2" r="1" /><circle cx="14" cy="2" r="1" /></svg>
				</button>
			</div>
			<div className="border-t border-[#d2d0ce] px-[5px] pt-1.5 text-[12px]">
				<h3 className="pl-1.5 leading-6">Values</h3>
				<div className="h-7 border border-dashed border-[#c8c6c4] bg-white pl-2.5 leading-6">Add data fields here</div>
				<h3 className="mt-2 pl-1.5 leading-6 font-semibold text-[#605e5c]">Drill through</h3>
				<div className="pl-1.5">
					<Toggle label="Cross-report" />
					<Toggle label="Keep all filters" on />
				</div>
				<div className="mt-1 h-[27px] border border-dashed border-[#c8c6c4] bg-white pl-1.5 leading-6 whitespace-nowrap">Add drill-through fields here</div>
			</div>
		</aside>
	);
}

function DataPane() {
	return (
		<aside className="flex w-[181px] shrink-0 flex-col border-l border-[#e1dfdd] bg-[#f3f2f1] text-[#252423]">
			<div className="flex h-9 items-center justify-between pr-1 pl-2">
				<h2 className="pt-0.5 text-[15px] font-semibold">Data</h2>
				<button aria-label="Collapse data pane" className="pt-0.5"><ChevronsRight size={21} strokeWidth={1.4} /></button>
			</div>
			<label className="mx-1 mt-[9px] flex h-[25px] items-center gap-1.5 rounded border border-[#d2d0ce] border-b-[#605e5c] bg-white pl-2.5">
				<Search size={16} strokeWidth={1.4} className="shrink-0" />
				<input aria-label="Search fields" placeholder="Search" className="w-full bg-transparent text-[13px] outline-none placeholder:text-[#605e5c]" />
			</label>
			<div className="flex items-center gap-1.5 pt-[9px] pl-2 text-[12px] leading-6">
				<svg width="12" height="8" viewBox="0 0 12 8" fill="none" stroke="#3b3a39"><path d="M.5 1l5.500 5.500L11.500 1" /></svg>
				<svg width="13" height="13" viewBox="0 0 13 13" fill="none" stroke="#252423"><rect x=".5" y=".5" width="12" height="12" rx="1" /><path d="M.5 4.500h12M.5 8.500h12M4.500 .5v12M8.500 .5v12" /></svg>
				Sheet1
			</div>
			{fields.map((field) => (
				<label key={field.name} className="flex h-6 items-center gap-2 pl-[26px] text-[12px] whitespace-nowrap">
					<span className="-mr-1 w-3">{field.kind === 'date' && <ChevronRight size={16} strokeWidth={1.4} className="-ml-1" />}</span>
					<input type="checkbox" className="size-3 appearance-none rounded-[2px] border border-[#797775] bg-white" />
					<span className="w-3">
						{field.kind === 'sum' && <svg width="12" height="13" viewBox="0 0 12 13" fill="none" stroke="#252423"><path d="M10.5 3V1H1l5 5.500L1 12h9.500v-2" /></svg>}
						{field.kind === 'date' && <svg width="12" height="12" viewBox="0 0 12 12" fill="none" stroke="#252423"><rect x=".5" y=".5" width="11" height="11" rx="2" /><path d="M.5 3.500h11M3 6h7M3 8.500h5" strokeDasharray="1.5 1" /></svg>}
					</span>
					<span>{field.name}</span>
				</label>
			))}
		</aside>
	);
}

function StatusBar() {
	return (
		<footer className="flex h-6 shrink-0 items-center justify-between border-t border-[#e1dfdd] bg-[#f3f2f1] pt-0.5 pr-[18px] pl-1 text-[11px] text-[#3b3a39]">
			<span>Page 1 of 1</span>
			<div className="flex items-center gap-1.5">
				<button aria-label="Zoom out"><svg width="5" height="2" viewBox="0 0 5 2"><path d="M0 0h5v2H0z" fill={INK} /></svg></button>
				<input
					type="range"
					aria-label="Zoom"
					defaultValue={52}
					className="h-3 w-[100px] appearance-none bg-[linear-gradient(#605e5c,#605e5c)] bg-[length:100%_1px] bg-center bg-no-repeat [&::-webkit-slider-thumb]:h-3 [&::-webkit-slider-thumb]:w-1 [&::-webkit-slider-thumb]:appearance-none [&::-webkit-slider-thumb]:bg-[#3b3a39]"
				/>
				<button aria-label="Zoom in"><svg width="8" height="8" viewBox="0 0 8 8" stroke={INK}><path d="M4 0v8M0 4h8" /></svg></button>
				<span className="ml-2 w-[33px] text-[#605e5c]">112%</span>
				<button aria-label="Fit to page" className="ml-0.5"><svg width="16" height="12" viewBox="0 0 16 12" fill="none" stroke={INK}><path d="M.5 .5h15v11H.5zM3 5V3h2M11 3h2v2M13 7v2h-2M5 9H3V7" /></svg></button>
			</div>
		</footer>
	);
}

/* ---------- Taskbar ---------- */

const apps: { name: string; art: ReactNode; running?: boolean; active?: boolean }[] = [
	{ name: 'Task view', art: <><path d="M1 9h14v14H1z" fill="#6b6b6b" /><path d="M7 2h16v14H7z" fill="#f2f2f2" /><path d="M7 9h8v7H7z" fill="#b8b8b8" /></> },
	{ name: 'Microsoft Store', art: <><path d="M8 7V2h8v5" fill="none" stroke="#3aa7e8" strokeWidth="2" /><rect x="1" y="6" width="22" height="17" rx="2" fill="#f4f4f4" /><path d="M7 10h4v4H7z" fill="#e5482d" /><path d="M12 10h4v4h-4z" fill="#6cb33f" /><path d="M7 15h4v4H7z" fill="#2a9be0" /><path d="M12 15h4v4h-4z" fill="#f5b81c" /></> },
	{ name: 'File Explorer', running: true, art: <><path d="M0 3h9l3 3h11v15H0z" fill="#e9a820" /><path d="M0 9h23v12H0z" fill="#ffd158" /><path d="M6 16h11v5H6z" fill="#3a8bd8" /></> },
	{ name: 'Telegram', running: true, art: <><circle cx="11" cy="12" r="11" fill="#2ba0da" /><path d="M4 12l13-6-2 12-4-3-2 2-1-4z" fill="#fff" /><rect x="12" y="0" width="16" height="12" rx="6" fill="#e23b3b" /><text x="20" y="9" fontSize="9" textAnchor="middle" fill="#fff">87</text></> },
	{ name: 'LinkedIn', art: <><rect x="0" y="2" width="22" height="21" rx="2" fill="#0a66c2" /><path d="M4 10h3v9H4zM4 5h3v3H4zM9 10h3v2c2-3 7-3 7 2v5h-3v-5c0-3-4-2-4 0v5H9z" fill="#fff" /><circle cx="20" cy="3" r="8" fill="#168bf2" /><text x="20" y="7" fontSize="11" textAnchor="middle" fill="#0c2238">6</text></> },
	{ name: 'Edge', art: <><circle cx="12" cy="12" r="11" fill="#1d7fd0" /><path d="M2 9C4-1 22-2 23 10c0 6-8 7-9 4 3-4-5-9-12-5z" fill="#4cc98c" /><path d="M9 12c-2 6 4 11 11 8-6 6-18 3-18-6 1-4 4-5 7-2z" fill="#0f4f9c" /></> },
	{ name: 'Word', art: <><rect x="5" y="1" width="18" height="22" rx="2" fill="#41a5ee" /><path d="M5 8h18v8H5z" fill="#2b7cd3" /><path d="M5 16h18v5l-2 2H7l-2-2z" fill="#185abd" /><rect x="0" y="6" width="13" height="13" rx="1" fill="#1a4fa3" /><text x="6.5" y="16" fontSize="10" fontWeight="700" textAnchor="middle" fill="#fff">W</text></> },
	{ name: 'Chrome', running: true, art: <><circle cx="12" cy="12" r="11" fill="#fbc116" /><path d="M2.5 6.5a11 11 0 0119 0H12l-4.500 8z" fill="#e33b2e" /><path d="M2.5 6.5L7.500 14.500l5 8.500a11 11 0 01-10-16.500z" fill="#2ba24c" /><circle cx="12" cy="12" r="5.5" fill="#fff" /><circle cx="12" cy="12" r="4.2" fill="#3b78e7" /></> },
	{ name: 'Visual Studio Code', art: <><path d="M17 0l6 3v18l-6 3L6 13l-4 3-2-1 4-3-4-3 2-1 4 3z" fill="#2489ca" /><path d="M17 7v10l-6-5z" fill="#232a18" /><path d="M17 0l6 3v18l-6 3z" fill="#3ea6f0" /></> },
	{ name: 'Teams', art: <><circle cx="13" cy="5" r="4" fill="#7b83eb" /><circle cx="20" cy="6" r="3" fill="#5059c9" /><path d="M8 9h15v6c0 6-10 10-15 3z" fill="#6a70d8" /><rect x="0" y="6" width="12" height="12" rx="1" fill="#464eb8" /><text x="6" y="15.5" fontSize="9" fontWeight="700" textAnchor="middle" fill="#fff">T</text></> },
	{ name: 'Brave', art: <><path d="M6 1h12l4 5-1 10-9 8-9-8L2 6z" fill="#fb542b" /><path d="M7 5l5 1 5-1 3 5-4 5-4 5-4-5-4-5z" fill="#fff" /><path d="M8 9l3 2-1 3 2 2 2-2-1-3 3-2M12 16v4" fill="none" stroke="#fb542b" strokeWidth="1.5" /></> },
	{ name: 'YouTube', art: <><rect x="0" y="3" width="24" height="18" rx="3" fill="#f30833" /><path d="M9.5 8v8l6-4z" fill="#fff" /></> },
	{ name: 'Power BI Desktop', active: true, art: <><path d="M12 0h9v24h-9z" fill="#e0a400" /><path d="M7 6h9v18H7z" fill="#f2c530" /><path d="M2 13h9v11H2z" fill="#f9e06f" /></> },
	{ name: 'Media Player', running: true, art: <><circle cx="12" cy="12" r="10.5" fill="#3a3a40" stroke="#d98a4e" strokeWidth="2" /><path d="M2 14a10.500 10.500 0 0020 0" fill="none" stroke="#8b78c8" strokeWidth="2" /><path d="M9 6v12l8-6z" fill="#fff" /></> },
];

function Taskbar() {
	return (
		<div className="relative flex h-[49px] shrink-0 items-center border-t border-black bg-[linear-gradient(90deg,#1c2a2d,#2a2a17_13%,#352117_24%,#33231a_48%,#292a19_70%,#33241a_84%,#2a2516)] text-white">
			<button className="flex flex-1 items-center gap-1 pl-4 text-left text-[11px] leading-4">
				<svg width="30" height="30" viewBox="0 0 30 30" className="shrink-0">
					<path d="M12 5l3 5-2 8-8 0-3-3z" fill="#f5a623" />
					<path d="M6 28c-6 0-7-8-1-9 2-7 12-6 13 0 6 0 7 9 1 9z" fill="#a7c7f2" />
					<circle cx="21" cy="8" r="8" fill="#f59aa8" />
					<text x="21" y="12" fontSize="11" textAnchor="middle" fill="#252423">2</text>
				</svg>
				<span className="flex flex-col">
					<span>21°C</span>
					<span className="text-[#d2d0ce]">غائم غالبًا</span>
				</span>
			</button>
			<div className="flex h-full items-center pl-1">
				<button aria-label="Start" className="flex w-11 justify-center">
					<svg width="24" height="24" viewBox="0 0 24 24" fill="#37b6f6"><path d="M0 0h11.500v11.500H0zM12.500 0H24v11.500H12.500zM0 12.500h11.500V24H0zM12.500 12.500H24V24H12.500z" /></svg>
				</button>
				<label className="mx-[3px] flex h-8 w-[219px] items-center gap-2.5 overflow-hidden rounded-full bg-[#4c3c34] pl-2.5">
					<Search size={17} strokeWidth={1.8} className="shrink-0" />
					<input aria-label="Taskbar search" placeholder="Search" className="w-full bg-transparent text-[13px] outline-none placeholder:text-[#e6e0dc]" />
					<svg width="54" height="26" viewBox="0 0 54 26" className="mr-1 shrink-0">
						<path d="M4 26L6 8l6-6 6 4 2 20z" fill="#7d8794" />
						<path d="M36 26l1-20 8-4 6 8 3 16z" fill="#6a7482" />
						<path d="M10 6l2 20M45 4l-2 22" stroke="#515b69" strokeWidth="2" />
						<path d="M18 26V4l6-4h8l6 4v22h-6V12c0-5-8-5-8 0v14z" fill="#c9b98c" />
						<path d="M24 26V13c0-4 8-4 8 0v13z" fill="#f1e8c8" />
						<path d="M10 26c2-5 6-5 9 0zM35 26c2-5 7-5 10 0z" fill="#7ea04a" />
					</svg>
				</label>
				{apps.map((app) => (
					<button key={app.name} aria-label={app.name} className={clsx('relative flex h-11 w-11 items-center justify-center rounded', app.active && 'bg-[#363626]')}>
						<svg width="24" height="24" viewBox="0 0 24 24" className="overflow-visible">{app.art}</svg>
						{app.running && <span className="absolute bottom-0 h-[3px] w-1.5 rounded-full bg-[#9a9590]" />}
						{app.active && <span className="absolute bottom-0 h-[3px] w-4 rounded-full bg-[#2a8fe0]" />}
					</button>
				))}
			</div>
			<div className="flex flex-1 items-center justify-end pr-[19px] text-[11px]">
				<button aria-label="Hidden icons"><ChevronUp size={18} strokeWidth={2} /></button>
				<button className="ml-7 w-3 text-[13px]">ع</button>
				<button aria-label="Network, volume and battery" className="ml-6 flex items-center gap-2">
					<Wifi size={16} strokeWidth={2} />
					<Volume2 size={16} strokeWidth={1.5} />
					<svg width="17" height="14" viewBox="0 0 17 14" fill="none" stroke="#fff"><path d="M6 2.5h8.500v10h-12V8" /><path d="M6 5h7v6H5V8z" fill="#fff" stroke="none" /><path d="M3.5 0L1 5h2L2 9l4-5H4l1-4zM16 6v3" fill="#fff" /></svg>
				</button>
				<button className="ml-4 text-right text-[12px] leading-4">12:08 AM<br />10/29/2025</button>
			</div>
			<div className="pointer-events-none absolute -top-16 left-1/2 flex -translate-x-1/2 flex-col items-center font-bold whitespace-nowrap [font-family:'DejaVu_Sans',sans-serif]">
				<span className="text-[72px] leading-[76px] text-[#dcdbda]/90">نفذلي</span>
				<span className="text-[36px] leading-8 text-[#dedad6]/75 [font-family:Roboto,sans-serif]">nafezly.com</span>
			</div>
		</div>
	);
}

export default function App() {
	return (
		<div className="flex min-h-screen flex-col bg-[#f3f2f1] [font-family:'Open_Sans','DejaVu_Sans',sans-serif]">
			<TitleBar />
			<Ribbon />
			<div className="flex flex-1">
				<ViewRail />
				<div className="flex min-w-0 flex-1 flex-col">
					<div className="flex flex-1">
						<ReportPage />
						<FiltersPane />
					</div>
					<PageTabs />
				</div>
				<VisualizationsPane />
				<DataPane />
			</div>
			<StatusBar />
			<Taskbar />
		</div>
	);
}
